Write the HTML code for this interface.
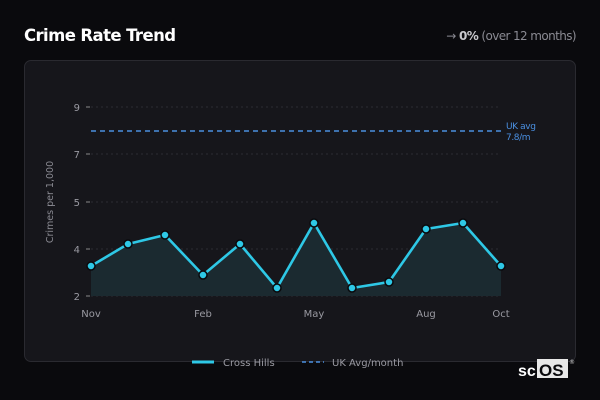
<!DOCTYPE html>
<html><head><meta charset="utf-8"><style>
body{margin:0;width:600px;height:400px;background:#0a0a0d;font-family:"Liberation Sans","DejaVu Sans",sans-serif;position:relative;overflow:hidden}
.t{position:absolute;left:24px;top:26px;color:#fff;font-size:16.5px;font-weight:bold;font-family:"DejaVu Sans",sans-serif;letter-spacing:-0.6px}
.r{position:absolute;right:24px;top:29px;color:#8a8a92;font-size:12px;font-family:"DejaVu Sans",sans-serif;letter-spacing:-0.6px}
.r b{color:#c8c8cc}
.card{position:absolute;left:24px;top:60px;width:550px;height:300px;background:#16161b;border:1px solid #2a2a30;border-radius:7px}
</style></head><body>
<div class="t">Crime Rate Trend</div>
<div class="r">→ <b>0%</b> (over 12 months)</div>
<div class="card"></div>
<svg width="600" height="400" style="position:absolute;left:0;top:0" font-family="DejaVu Sans, sans-serif">
<g stroke="#2c2c33" stroke-dasharray="2,3" stroke-width="1">
<line x1="91" y1="107" x2="501" y2="107"/><line x1="91" y1="154" x2="501" y2="154"/><line x1="91" y1="202" x2="501" y2="202"/><line x1="91" y1="249" x2="501" y2="249"/><line x1="91" y1="296" x2="501" y2="296"/>
</g>
<g stroke="#888" stroke-width="1"><line x1="86" y1="107" x2="90" y2="107"/><line x1="86" y1="154" x2="90" y2="154"/><line x1="86" y1="202" x2="90" y2="202"/><line x1="86" y1="249" x2="90" y2="249"/><line x1="86" y1="296" x2="90" y2="296"/></g>
<g fill="#9a9aa2" font-size="10" text-anchor="end"><text x="80" y="111">9</text><text x="80" y="158">7</text><text x="80" y="206">5</text><text x="80" y="253">4</text><text x="80" y="300">2</text></g>
<text transform="translate(53,202) rotate(-90)" fill="#8a8a92" font-size="9.5" text-anchor="middle">Crimes per 1,000</text>
<line x1="91" y1="131" x2="501" y2="131" stroke="#4a8fe0" stroke-width="1.6" stroke-dasharray="5,4"/>
<text x="506" y="129" fill="#4a8fe0" font-size="9" letter-spacing="-0.4">UK avg</text><text x="506" y="140" fill="#4a8fe0" font-size="9" letter-spacing="-0.4">7.8/m</text>
<polygon fill="#1b2a30" points="91,296 91,266 128,244 165,235 203,275 240,244 277,288 314,223 352,288 389,282 426,229 463,223 501,266 501,296"/>
<polyline fill="none" stroke="#2ec8e6" stroke-width="2.6" stroke-linejoin="round" points="91,266 128,244 165,235 203,275 240,244 277,288 314,223 352,288 389,282 426,229 463,223 501,266"/>
<g fill="#2ec8e6" stroke="#0a0a0d" stroke-width="1.5">
<circle cx="91" cy="266" r="4"/><circle cx="128" cy="244" r="4"/><circle cx="165" cy="235" r="4"/><circle cx="203" cy="275" r="4"/><circle cx="240" cy="244" r="4"/><circle cx="277" cy="288" r="4"/><circle cx="314" cy="223" r="4"/><circle cx="352" cy="288" r="4"/><circle cx="389" cy="282" r="4"/><circle cx="426" cy="229" r="4"/><circle cx="463" cy="223" r="4"/><circle cx="501" cy="266" r="4"/>
</g>
<g fill="#9a9aa2" font-size="10" text-anchor="middle"><text x="91" y="317">Nov</text><text x="203" y="317">Feb</text><text x="314" y="317">May</text><text x="426" y="317">Aug</text><text x="501" y="317">Oct</text></g>
<line x1="192" y1="362" x2="214" y2="362" stroke="#2ec8e6" stroke-width="3"/>
<text x="223" y="366" fill="#9a9aa2" font-size="10">Cross Hills</text>
<line x1="302" y1="362" x2="324" y2="362" stroke="#4a8fe0" stroke-width="1.6" stroke-dasharray="4,3"/>
<text x="332" y="366" fill="#9a9aa2" font-size="10">UK Avg/month</text>
<text x="518" y="376" fill="#fff" font-size="16" font-weight="bold" font-family="Liberation Sans">sc</text>
<rect x="537" y="359" width="31" height="19" fill="#e8e8e8"/>
<text x="539" y="376" fill="#0a0a0d" font-size="17" font-weight="bold" font-family="Liberation Sans">OS</text>
<text x="569" y="364" fill="#ccc" font-size="6">®</text>
</svg>
</body></html>
